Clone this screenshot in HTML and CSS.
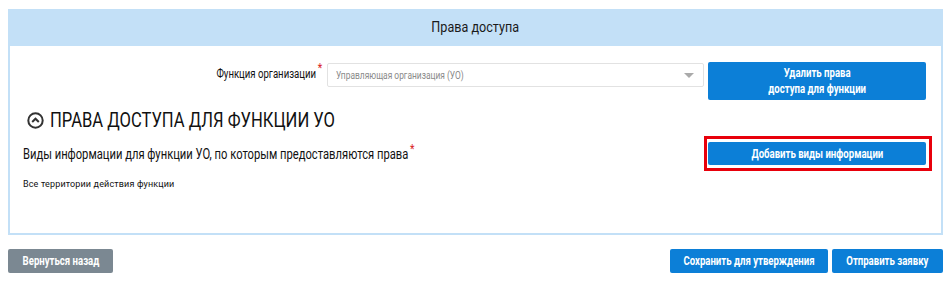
FILE: index.html
```html
<!DOCTYPE html>
<html lang="ru">
<head>
    <meta charset="UTF-8">
    <title>Права доступа</title>
    <link rel="stylesheet" href="styles.css">
</head>
<body>
    <div class="panel">
        <div class="panel-header"><span class="cond">Права доступа</span></div>
        <div class="panel-body">
            <div class="func-row">
                <label class="func-label"><span class="cond">Функция организации<span class="req">*</span></span></label>
                <div class="select">
                    <span class="cond cond-left">Управляющая организация (УО)</span>
                    <span class="arrow"></span>
                </div>
                <button class="btn btn-blue btn-wide"><span class="cond">Удалить права<br>доступа для функции</span></button>
            </div>

            <h3 class="section-title">
                <svg width="17" height="17" viewBox="0 0 17 17">
                    <circle cx="8.5" cy="8.5" r="7.2" fill="none" stroke="#333" stroke-width="2"/>
                    <path d="M5.2 10 L8.5 6.7 L11.8 10" fill="none" stroke="#333" stroke-width="2"/>
                </svg>
                <span class="cond cond-left">ПРАВА ДОСТУПА ДЛЯ ФУНКЦИИ УО</span>
            </h3>

            <div class="info-row">
                <div class="info-label"><span class="cond cond-left">Виды информации для функции УО, по которым предоставляются права<span class="req">*</span></span></div>
                <div class="highlight">
                    <button class="btn btn-blue btn-wide btn-low"><span class="cond">Добавить виды информации</span></button>
                </div>
            </div>

            <div class="territory">Все территории действия функции</div>
        </div>
    </div>

    <div class="actions">
        <button class="btn btn-gray btn-back"><span class="cond">Вернуться назад</span></button>
        <div class="actions-right">
            <button class="btn btn-blue btn-save"><span class="cond">Сохранить для утверждения</span></button>
            <button class="btn btn-blue btn-send"><span class="cond">Отправить заявку</span></button>
        </div>
    </div>
</body>
</html>
```

FILE: styles.css
```css
body {
    margin: 0;
    padding: 9px 7px 0 8px;
    font-family: Roboto, 'Liberation Sans', sans-serif;
    color: #222;
    background: #fff;
}
/* no condensed face installed, squeeze the text instead */
.cond {
    display: inline-block;
    white-space: nowrap;
    transform: scaleX(0.84);
}
.cond-left {
    transform-origin: left center;
}
.panel {
    border: 2px solid #c3e0f7;
    border-top: none;
}
.panel-header {
    background: #c3e0f7;
    height: 37px;
    line-height: 37px;
    text-align: center;
    font-size: 15px;
    color: #1a1a1a;
    margin: 0 -2px;
}
.panel-body {
    padding: 16px 15px 44px 13px;
}
.func-row {
    display: flex;
    justify-content: flex-end;
    align-items: flex-start;
}
.func-label {
    font-size: 12px;
    line-height: 24px;
    margin-right: 5px;
    color: #111;
}
.func-label .cond {
    transform: scaleX(0.8);
    transform-origin: right center;
}
.req {
    color: #d9221c;
    font-size: 13px;
    position: relative;
    top: -6px;
    margin-left: 2px;
}
.select {
    width: 377px;
    height: 24px;
    margin-top: 1px;
    border: 1px solid #e2e2e2;
    border-radius: 2px;
    box-sizing: border-box;
    display: flex;
    align-items: center;
    justify-content: space-between;
    padding: 0 9px 0 8px;
    font-size: 10px;
    color: #8a8a8a;
}
.arrow {
    width: 0;
    height: 0;
    border-left: 5px solid transparent;
    border-right: 5px solid transparent;
    border-top: 5px solid #aaa;
}
.btn {
    display: flex;
    align-items: center;
    justify-content: center;
    font-family: Roboto, 'Liberation Sans', sans-serif;
    font-weight: bold;
    font-size: 12px;
    color: #fff;
    border: none;
    border-radius: 2px;
    height: 24px;
    padding: 0;
    cursor: pointer;
}
.btn .cond {
    transform: scaleX(0.8);
}
.btn-blue {
    background: #0c7fd7;
}
.btn-gray {
    background: #7b8892;
}
.btn-wide {
    width: 218px;
    height: 38px;
    margin-left: 4px;
    line-height: 16px;
    text-align: center;
}
.btn-low {
    height: 23px;
    margin-left: 0;
}
.btn-back {
    width: 105px;
}
.btn-save {
    width: 158px;
}
.btn-send {
    width: 111px;
}
.section-title {
    display: flex;
    align-items: center;
    gap: 6px;
    height: 26px;
    margin: 7px 0 0 4px;
    font-size: 21px;
    font-weight: normal;
    color: #111;
}
.section-title .cond {
    transform: scaleX(0.79);
}
.info-row {
    display: flex;
    justify-content: space-between;
    align-items: center;
    margin-top: 3px;
}
.info-label {
    font-size: 14px;
    color: #111;
}
.info-label .cond {
    transform: scaleX(0.8);
}
.highlight {
    border: 3px solid #e8000b;
    padding: 3px 3px 3px 1px;
    margin-right: -6px;
}
.territory {
    font-size: 9px;
    letter-spacing: 0.15px;
    margin-top: 8px;
    color: #111;
}
.actions {
    display: flex;
    justify-content: space-between;
    margin-top: 14px;
}
.actions-right {
    display: flex;
    gap: 4px;
}
```
